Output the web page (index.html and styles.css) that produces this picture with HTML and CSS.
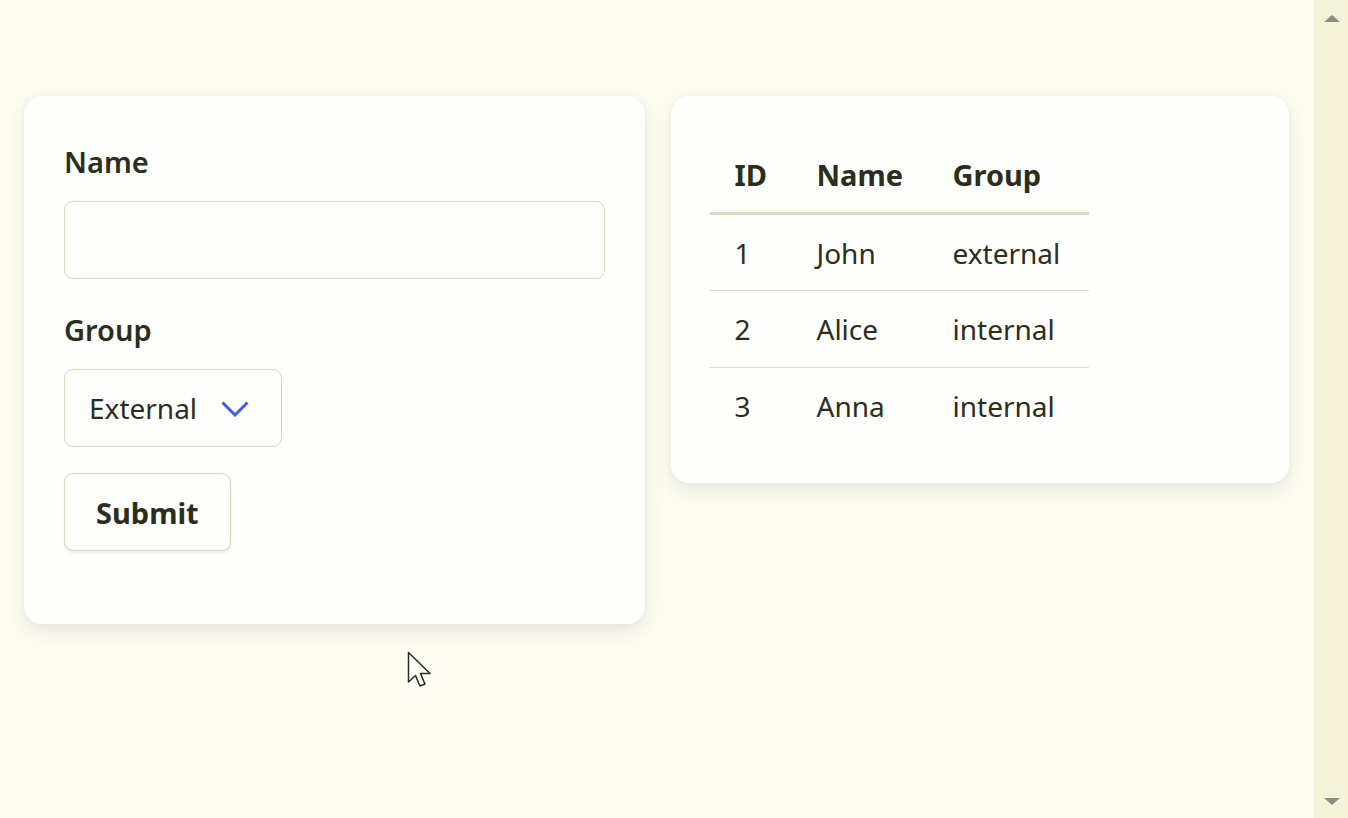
FILE: index.html
```html
<!DOCTYPE html>
<html lang="en">
<head>
<meta charset="utf-8">
<title>Users</title>
<link rel="stylesheet" href="styles.css">
</head>
<body>
<div class="viewport">
  <main class="page">
    <section class="card form-card">
      <form class="form">
        <div class="field">
          <label class="label" for="name">Name</label>
          <input class="input" id="name" type="text">
        </div>
        <div class="field">
          <label class="label">Group</label>
          <div class="select">
            <span>External</span>
            <svg class="chevron" width="28" height="16" viewBox="0 0 28 16"><polyline points="1.5,1.5 14,14 26.5,1.5" fill="none" stroke="#4756ee" stroke-width="3" stroke-linejoin="miter"/></svg>
          </div>
        </div>
        <button class="button" type="button">Submit</button>
      </form>
    </section>
    <section class="card table-card">
      <table class="table">
        <thead>
          <tr><th class="col-id">ID</th><th class="col-name">Name</th><th class="col-group">Group</th></tr>
        </thead>
        <tbody>
          <tr><td>1</td><td>John</td><td>external</td></tr>
          <tr><td>2</td><td>Alice</td><td>internal</td></tr>
          <tr><td>3</td><td>Anna</td><td>internal</td></tr>
        </tbody>
      </table>
    </section>
  </main>
  <div class="scrollbar">
    <span class="arrow up"></span>
    <span class="arrow down"></span>
  </div>
</div>
<svg class="cursor" width="26" height="40" viewBox="0 0 26 40"><path d="M1.5 1.5 L1.5 31 L8.5 24.5 L13 35 L18 33 L13.5 22.5 L23 22.5 Z" fill="#fefef8" stroke="#2a2a2a" stroke-width="1.5" stroke-linejoin="round"/></svg>
</body>
</html>
```

FILE: styles.css
```css
* { box-sizing: border-box; }
html, body {
  margin: 0;
  padding: 0;
  width: 1348px;
  height: 818px;
  overflow: hidden;
  background: #fdfdf4;
  font-family: "Noto Sans", "Open Sans", sans-serif;
  color: #2a2f1b;
}
.viewport {
  display: flex;
  height: 818px;
}
.page {
  flex: 1;
  display: flex;
  align-items: flex-start;
  gap: 26px;
  padding: 96px 25px 0 24px;
}
.card {
  flex: 1;
  background: #fefefc;
  border-radius: 18px;
  box-shadow: 0 8px 20px rgba(130, 130, 90, 0.17), 0 0 5px rgba(130, 130, 90, 0.09);
}
.form-card {
  padding: 46px 40px 73px;
}
.form {
  display: flex;
  flex-direction: column;
}
.field {
  display: flex;
  flex-direction: column;
  align-items: flex-start;
  margin-bottom: 26px;
}
.field + .field { margin-top: 5px; }
.label {
  font-size: 29px;
  font-weight: 600;
  line-height: 40px;
  margin-bottom: 19px;
}
.input {
  width: 100%;
  height: 78px;
  border: 1.5px solid #d9d6b9;
  border-radius: 9px;
  background: #fefefc;
  font: inherit;
  font-size: 28px;
  padding: 0 24px;
  outline: none;
}
.select {
  display: flex;
  align-items: center;
  gap: 24px;
  height: 78px;
  padding: 0 32px 0 24px;
  border: 1.5px solid #d9d6b9;
  border-radius: 9px;
  background: #fefefc;
  font-size: 28px;
}
.chevron { display: block; margin-top: 1px; }
.button {
  align-self: flex-start;
  height: 78px;
  padding: 0 31px;
  border: 1.5px solid #d9d6b9;
  border-radius: 9px;
  background: #fefefc;
  font: inherit;
  font-size: 29px;
  font-weight: 700;
  color: #2a2f1b;
  box-shadow: 0 2px 3px rgba(130, 130, 90, 0.13);
}
.table-card {
  padding: 41px 39px 39px;
}
.table {
  border-collapse: collapse;
  table-layout: fixed;
  width: 379px;
  font-size: 28px;
}
.col-id { width: 82px; }
.col-name { width: 136px; }
.col-group { width: 161px; }
.table th, .table td {
  text-align: left;
  padding: 0 0 0 25px;
  line-height: 39px;
  white-space: nowrap;
}
.table th {
  font-size: 29px;
  font-weight: 700;
  height: 76px;
  border-bottom: 3px solid #dcdbc4;
}
.table td {
  height: 77px;
  padding-top: 2px;
  border-bottom: 1.5px solid #dcdbc4;
}
.table tbody tr:last-child td { border-bottom: none; }
.scrollbar {
  width: 34px;
  height: 818px;
  background: #f4f3da;
  display: flex;
  flex-direction: column;
  justify-content: space-between;
  align-items: center;
  padding: 15px 0 13px 2px;
}
.arrow {
  width: 0;
  height: 0;
  border-left: 8px solid transparent;
  border-right: 8px solid transparent;
}
.arrow.up { border-bottom: 7px solid #8d8d88; }
.arrow.down { border-top: 7px solid #8d8d88; }
.cursor {
  position: absolute;
  left: 407px;
  top: 651px;
}
```
